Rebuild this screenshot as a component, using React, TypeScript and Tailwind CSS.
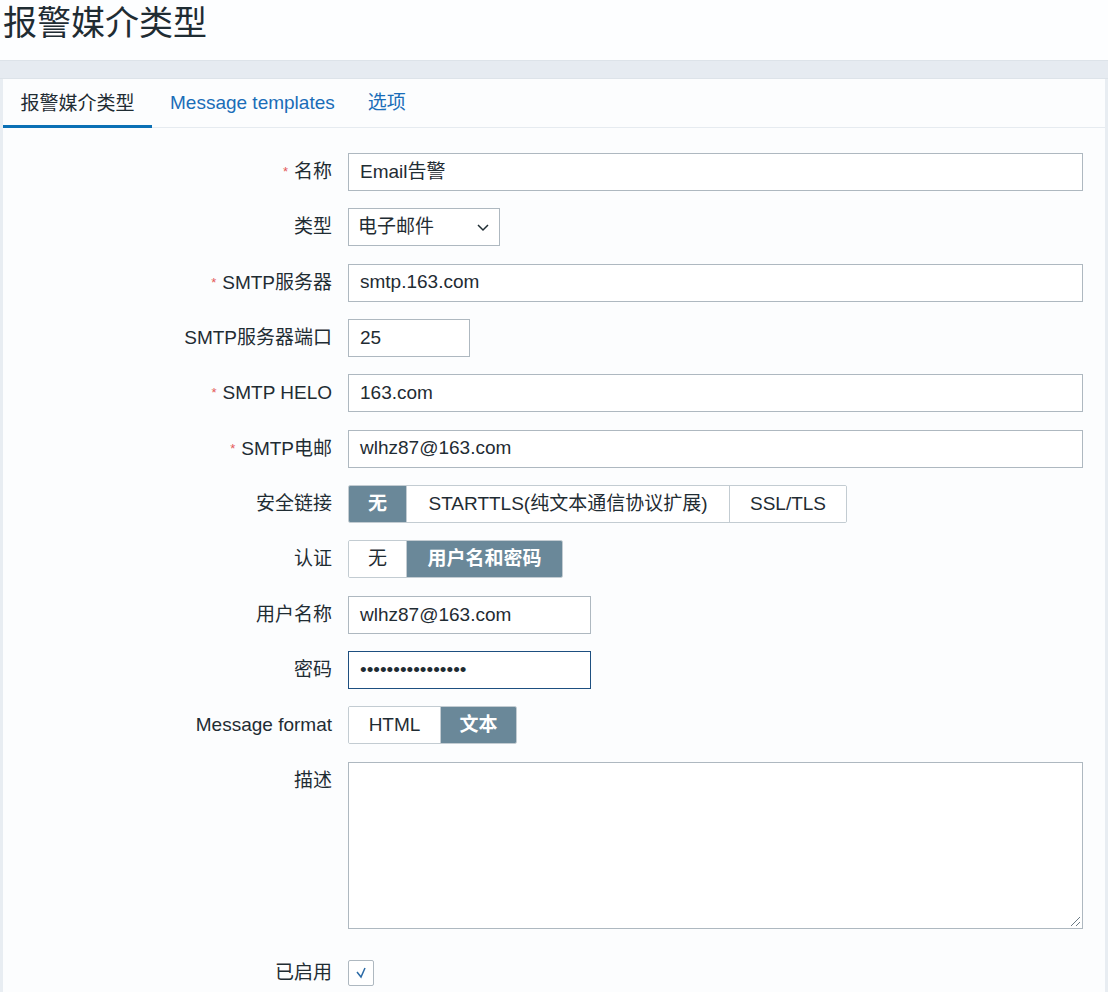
import React from 'react'

const font = { fontFamily: '"Liberation Sans", "Noto Sans CJK SC", sans-serif' }

function Label({ text, required }: { text: string; required?: boolean }) {
  return (
    <div className="w-[329px] shrink-0 text-right text-[19px] leading-[38px] text-[#1f2c33]">
      {required && <span className="text-[#e45959] text-[13px] align-top mr-[6px]">*</span>}
      {text}
    </div>
  )
}

function TextInput({ value, width, focus }: { value: string; width: string; focus?: boolean }) {
  return (
    <div
      className={`${width} h-[38px] flex items-center px-[11px] text-[19px] text-[#1f2c33] bg-white border ${
        focus ? 'border-[#1d4f80]' : 'border-[#aeb8c0]'
      }`}
    >
      {value}
    </div>
  )
}

function Segmented({ items, active }: { items: { label: string; w: string }[]; active: number }) {
  return (
    <div className="flex h-[38px] rounded-[2px] overflow-hidden border border-[#c3ccd2]">
      {items.map((it, i) => (
        <div
          key={it.label}
          className={`${it.w} flex items-center justify-center text-[19px] ${
            i > 0 ? 'border-l border-[#c3ccd2]' : ''
          } ${i === active ? 'bg-[#6a8899] text-white font-bold' : 'bg-white text-[#1f2c33]'}`}
        >
          {it.label}
        </div>
      ))}
    </div>
  )
}

function Row({ label, required, children, top }: { label: string; required?: boolean; children: React.ReactNode; top?: boolean }) {
  return (
    <div className={`flex ${top ? 'items-start' : 'items-center'} gap-[16px]`}>
      <Label text={label} required={required} />
      {children}
    </div>
  )
}

export default function App() {
  return (
    <div style={font} className="w-[1108px] h-[992px] bg-[#fbfcfd] overflow-hidden">
      <div className="h-[60px] bg-[#fdfeff] pl-[3px]">
        <h1 className="text-[34px] leading-[46px] text-[#1f2c33] font-normal">报警媒介类型</h1>
      </div>
      <div className="h-[19px] bg-[#e6ebf1] border-y border-[#dde3e9]" />
      <div className="border-l-[3px] border-r-[3px] border-[#e8edf2] bg-[#fcfdfe] h-[913px]">
        <div className="flex items-end h-[49px] border-b border-[#e6ebf0]">
          <div className="w-[149px] h-full flex items-center justify-center text-[19px] text-[#1f2c33] border-b-[3px] border-[#0b70b5] mb-[-1px] pt-[3px]">
            报警媒介类型
          </div>
          <div className="h-full flex items-center ml-[18px] text-[19px] text-[#1a6db8]">Message templates</div>
          <div className="h-full flex items-center ml-[33px] text-[19px] text-[#1a6db8]">选项</div>
        </div>
        <div className="flex flex-col gap-[17.35px] pt-[25px]">
          <Row label="名称" required>
            <TextInput value="Email告警" width="w-[735px]" />
          </Row>
          <Row label="类型">
            <div className="w-[152px] h-[38px] flex items-center justify-between px-[9px] bg-white border border-[#aeb8c0] text-[19px] text-[#1f2c33]">
              <span>电子邮件</span>
              <svg width="14" height="14" viewBox="0 0 14 14" fill="none" stroke="#1f2c33" strokeWidth="1.5">
                <path d="M2 5l5 5 5-5" />
              </svg>
            </div>
          </Row>
          <Row label="SMTP服务器" required>
            <TextInput value="smtp.163.com" width="w-[735px]" />
          </Row>
          <Row label="SMTP服务器端口">
            <TextInput value="25" width="w-[122px]" />
          </Row>
          <Row label="SMTP HELO" required>
            <TextInput value="163.com" width="w-[735px]" />
          </Row>
          <Row label="SMTP电邮" required>
            <TextInput value="wlhz87@163.com" width="w-[735px]" />
          </Row>
          <Row label="安全链接">
            <Segmented
              active={0}
              items={[
                { label: '无', w: 'w-[57px]' },
                { label: 'STARTTLS(纯文本通信协议扩展)', w: 'w-[323px]' },
                { label: 'SSL/TLS', w: 'w-[117px]' },
              ]}
            />
          </Row>
          <Row label="认证">
            <Segmented
              active={1}
              items={[
                { label: '无', w: 'w-[57px]' },
                { label: '用户名和密码', w: 'w-[156px]' },
              ]}
            />
          </Row>
          <Row label="用户名称">
            <TextInput value="wlhz87@163.com" width="w-[243px]" />
          </Row>
          <Row label="密码">
            <TextInput value="••••••••••••••••" width="w-[243px]" focus />
          </Row>
          <Row label="Message format">
            <Segmented
              active={1}
              items={[
                { label: 'HTML', w: 'w-[91px]' },
                { label: '文本', w: 'w-[76px]' },
              ]}
            />
          </Row>
          <Row label="描述" top>
            <div className="relative w-[735px] h-[167px] bg-white border border-[#aeb8c0]">
              <svg className="absolute right-[1px] bottom-[1px]" width="12" height="12" viewBox="0 0 12 12" stroke="#6b7a85" strokeWidth="1">
                <path d="M11 2L2 11M11 7L7 11" />
              </svg>
            </div>
          </Row>
          <div className="flex items-center gap-[16px] mt-[13px]">
            <div className="w-[329px] text-right text-[19px] text-[#1f2c33]">已启用</div>
            <div className="w-[26px] h-[26px] bg-white border border-[#aeb8c0] rounded-[2px] flex items-center justify-center">
              <svg width="14" height="14" viewBox="0 0 14 14" fill="none" stroke="#2b6aa6" strokeWidth="1.5">
                <path d="M3 6l4 5 4-9" />
              </svg>
            </div>
          </div>
        </div>
      </div>
    </div>
  )
}
